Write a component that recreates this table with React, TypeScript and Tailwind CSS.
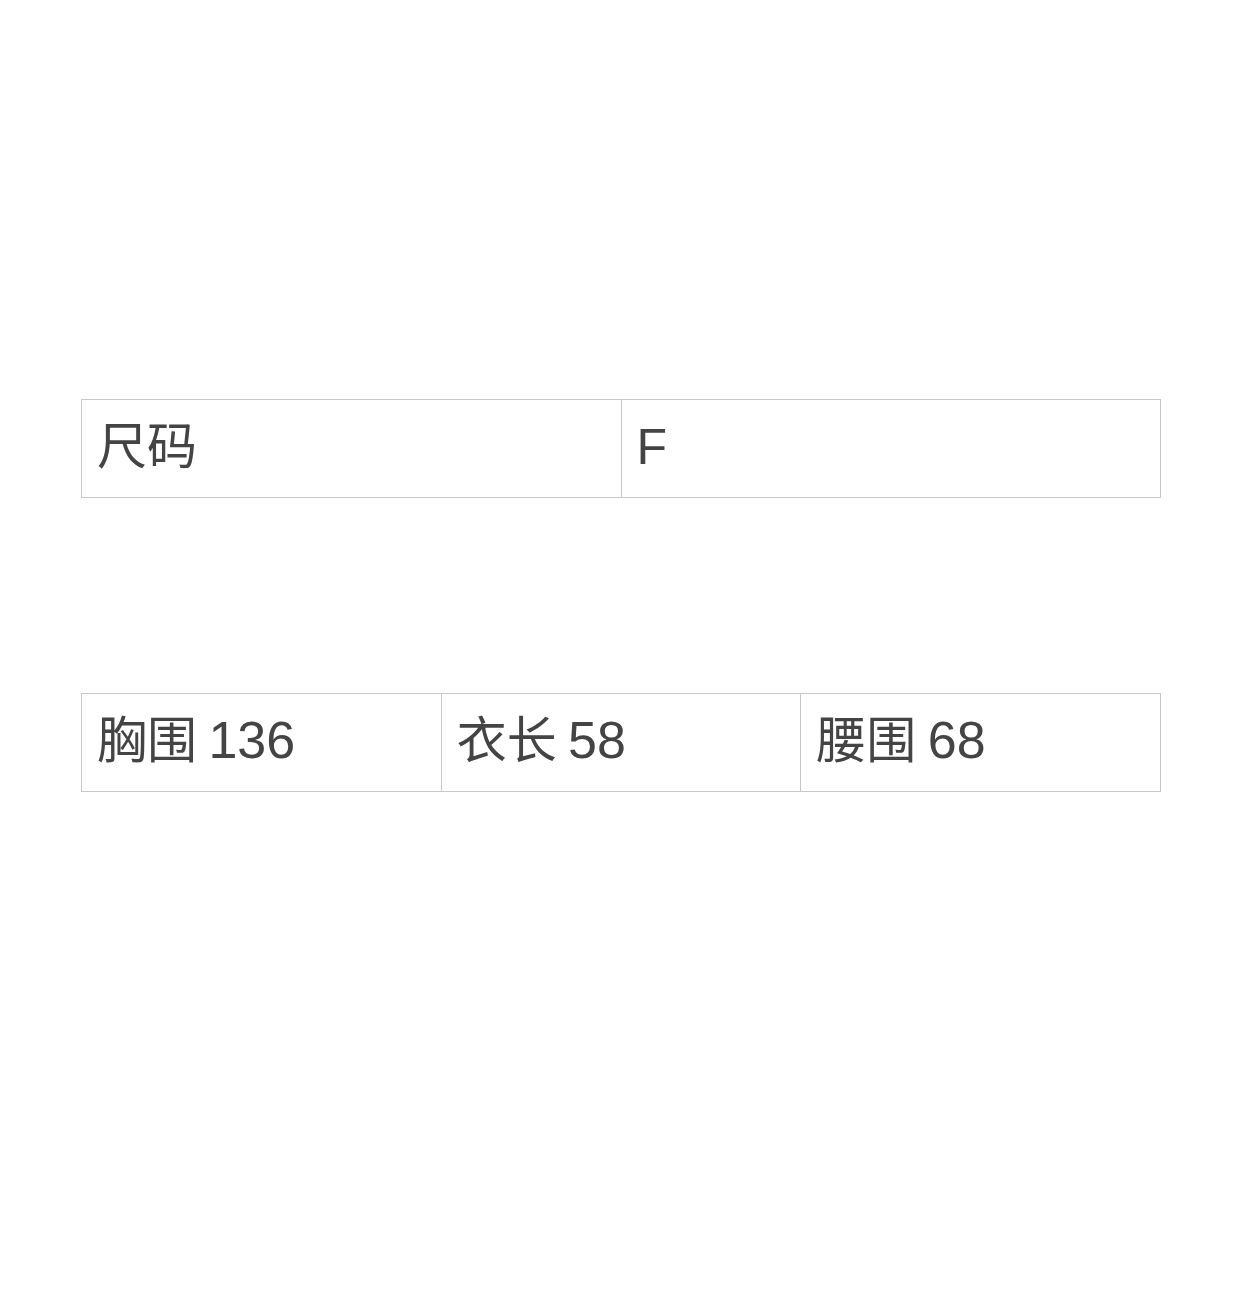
export default function App() {
  const cell =
    "border border-[#c8c8c8] px-[15px] pb-[4px] align-middle text-[50px] leading-[1.2] text-[#444] font-normal";

  return (
    <div
      className="min-h-[1290px] bg-white pt-[399px] pl-[81px]"
      style={{ fontFamily: '"Liberation Sans", "Noto Sans CJK SC", sans-serif' }}
    >
      <table className="w-[1080px] border-collapse table-fixed">
        <tbody>
          <tr className="h-[98px]">
            <td className={cell}>尺码</td>
            <td className={cell}>F</td>
          </tr>
        </tbody>
      </table>

      <table className="mt-[195px] w-[1080px] border-collapse table-fixed">
        <tbody>
          <tr className="h-[98px]">
            <td className={cell}>
              胸围<span className="ml-[-3px] text-[52px]"> 136</span>
            </td>
            <td className={cell}>
              衣长<span className="ml-[-3px] text-[52px]"> 58</span>
            </td>
            <td className={cell}>
              腰围<span className="ml-[-3px] text-[52px]"> 68</span>
            </td>
          </tr>
        </tbody>
      </table>
    </div>
  );
}
